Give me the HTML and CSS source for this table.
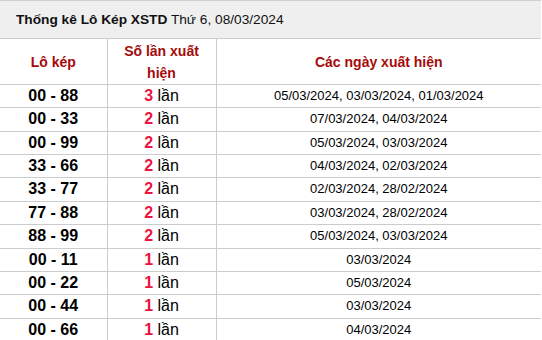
FILE: index.html
```html
<!DOCTYPE html>
<html>
<head>
<meta charset="utf-8">
<link rel="stylesheet" href="styles.css">
</head>
<body>
<div class="box">
  <div class="title"><b>Thống kê Lô Kép XSTD</b> Thứ 6, 08/03/2024</div>
  <table class="stats">
    <colgroup><col class="c1"><col class="c2"><col class="c3"></colgroup>
    <thead>
      <tr><th>Lô kép</th><th>Số lần xuất hiện</th><th>Các ngày xuất hiện</th></tr>
    </thead>
    <tbody>
      <tr><td class="pair">00 - 88</td><td class="cnt"><span class="num">3</span> lần</td><td class="dates">05/03/2024, 03/03/2024, 01/03/2024</td></tr>
      <tr><td class="pair">00 - 33</td><td class="cnt"><span class="num">2</span> lần</td><td class="dates">07/03/2024, 04/03/2024</td></tr>
      <tr><td class="pair">00 - 99</td><td class="cnt"><span class="num">2</span> lần</td><td class="dates">05/03/2024, 03/03/2024</td></tr>
      <tr><td class="pair">33 - 66</td><td class="cnt"><span class="num">2</span> lần</td><td class="dates">04/03/2024, 02/03/2024</td></tr>
      <tr><td class="pair">33 - 77</td><td class="cnt"><span class="num">2</span> lần</td><td class="dates">02/03/2024, 28/02/2024</td></tr>
      <tr><td class="pair">77 - 88</td><td class="cnt"><span class="num">2</span> lần</td><td class="dates">03/03/2024, 28/02/2024</td></tr>
      <tr><td class="pair">88 - 99</td><td class="cnt"><span class="num">2</span> lần</td><td class="dates">05/03/2024, 03/03/2024</td></tr>
      <tr><td class="pair">00 - 11</td><td class="cnt"><span class="num">1</span> lần</td><td class="dates">03/03/2024</td></tr>
      <tr><td class="pair">00 - 22</td><td class="cnt"><span class="num">1</span> lần</td><td class="dates">05/03/2024</td></tr>
      <tr><td class="pair">00 - 44</td><td class="cnt"><span class="num">1</span> lần</td><td class="dates">03/03/2024</td></tr>
      <tr><td class="pair">00 - 66</td><td class="cnt"><span class="num">1</span> lần</td><td class="dates">04/03/2024</td></tr>
    </tbody>
  </table>
</div>
</body>
</html>
```
FILE: styles.css
```css
html, body {
  margin: 0;
  padding: 0;
  background: #fff;
}
body {
  font-family: "Liberation Sans", Arial, sans-serif;
  color: #000;
}
.box {
  width: 541px;
}
.title {
  border-top: 1px solid #cfcfcf;
  background: #efefef;
  height: 37px;
  line-height: 37px;
  padding-left: 16px;
  font-size: 13.7px;
  color: #111;
}
.title b {
  font-weight: bold;
}
.stats {
  width: 541px;
  border-collapse: collapse;
  table-layout: fixed;
}
.c1 { width: 107px; }
.c2 { width: 109px; }
.stats th, .stats td {
  border: 1px solid #cccccc;
  text-align: center;
  padding: 2px 4px;
}
.stats th:first-child, .stats td:first-child { border-left: none; }
.stats th:last-child, .stats td:last-child { border-right: none; }
.stats th {
  height: 46px;
  box-sizing: border-box;
  padding: 0 8px;
  font-size: 14px;
  line-height: 22px;
  font-weight: bold;
  color: #a50a0a;
}
.stats td {
  font-size: 16px;
  line-height: 18.36px;
}
.pair {
  font-weight: bold;
}
.num {
  font-weight: bold;
  color: #ee1240;
}
.stats .dates {
  font-size: 13px;
}
```
